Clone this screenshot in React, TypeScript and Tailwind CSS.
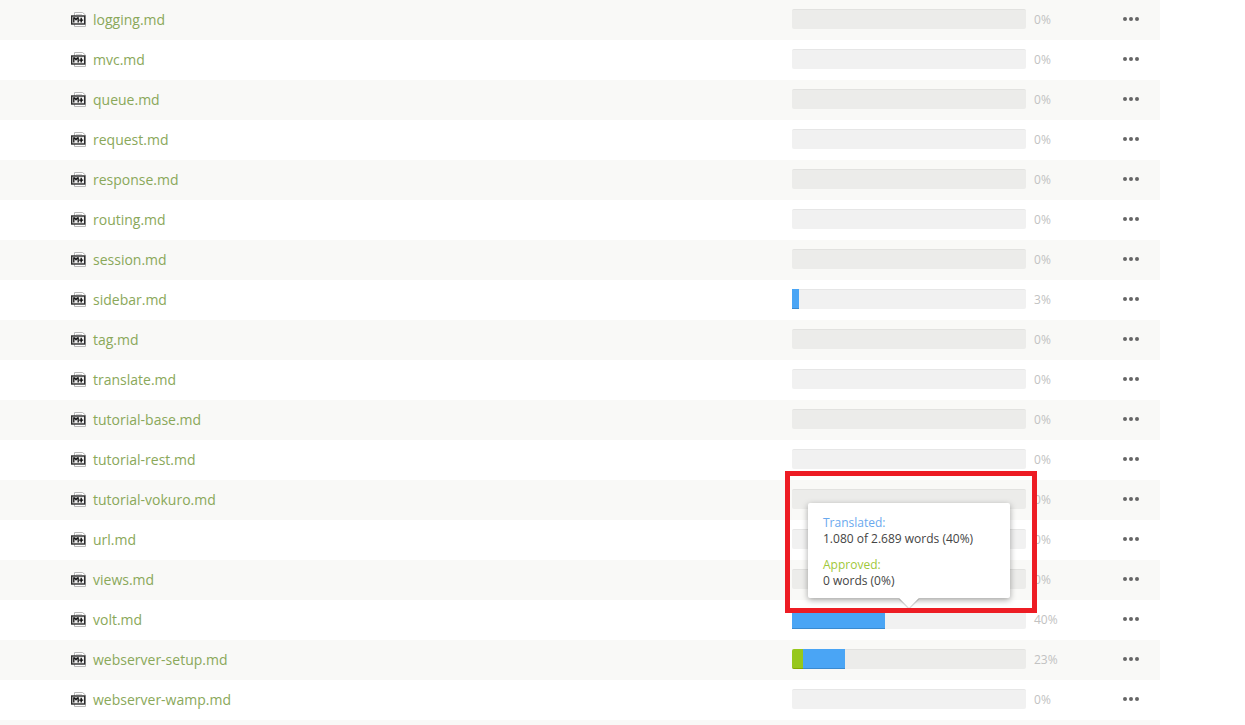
const files = [
  { name: "logging.md", percent: 0 },
  { name: "mvc.md", percent: 0 },
  { name: "queue.md", percent: 0 },
  { name: "request.md", percent: 0 },
  { name: "response.md", percent: 0 },
  { name: "routing.md", percent: 0 },
  { name: "session.md", percent: 0 },
  { name: "sidebar.md", percent: 3, translated: 7 },
  { name: "tag.md", percent: 0 },
  { name: "translate.md", percent: 0 },
  { name: "tutorial-base.md", percent: 0 },
  { name: "tutorial-rest.md", percent: 0 },
  { name: "tutorial-vokuro.md", percent: 0 },
  { name: "url.md", percent: 0 },
  { name: "views.md", percent: 0 },
  { name: "volt.md", percent: 40, translated: 93 },
  { name: "webserver-setup.md", percent: 23, approved: 11, translated: 42 },
  { name: "webserver-wamp.md", percent: 0 },
];

const FileIcon = () => (
  <svg width="16" height="15" viewBox="0 0 16 15" className="shrink-0">
    <path d="M3.5 4V.5h8l3 2.5V14.5H3.5V12" fill="#fff" stroke="#b8b8b8" />
    <path d="M5 2.5h6" stroke="#cfcfcf" />
    <rect x="0.7" y="4" width="13" height="8" fill="#ededed" stroke="#2b2b2b" strokeWidth="1.4" />
    <path d="M2.8 10.4V6h.9L5 7.6 6.3 6h.9v4.4" fill="none" stroke="#111" strokeWidth="1.3" />
    <path d="M10.2 5.8v4.6M8.2 8.1h4" fill="none" stroke="#111" strokeWidth="1.4" />
  </svg>
);

type Props = { name: string; percent: number; translated?: number; approved?: number };

const FileRow = ({ name, percent, translated, approved }: Props) => (
  <div className="group flex h-10 w-[1160px] items-center pb-[2px] odd:bg-[#f9f9f7] even:bg-white">
    <div className="ml-[71px] flex w-[721px] items-center gap-[6px]">
      <FileIcon />
      <span className="text-[14px] text-[#8aa85a]">{name}</span>
    </div>
    <div className="flex h-5 w-[234px] rounded-[2px] border-t border-[#e2e2e0] bg-[#ececea] group-even:border-[#e6e6e6] group-even:bg-[#f1f1f1]">
      {approved ? (
        <div
          className="-mt-px h-5 rounded-l-[2px] border-b border-[#84a800] bg-[#97c81c]"
          style={{ width: approved }}
        />
      ) : null}
      {translated ? (
        <div
          className="-mt-px h-5 border-b border-[#3a8ad0] bg-[#4aa5f5]"
          style={{ width: translated }}
        />
      ) : null}
    </div>
    <span className="ml-2 mt-[2px] w-[60px] text-[12px] text-[#c2c2c2]">{percent}%</span>
    <div className="ml-[29px] flex gap-[2px]">
      <span className="size-[4px] rounded-full bg-[#666]" />
      <span className="size-[4px] rounded-full bg-[#666]" />
      <span className="size-[4px] rounded-full bg-[#666]" />
    </div>
  </div>
);

export default function App() {
  return (
    <div className="relative h-[725px] w-[1245px] overflow-hidden bg-white font-['Open_Sans',sans-serif]">
      <div>
        {files.map((file) => (
          <FileRow key={file.name} {...file} />
        ))}
        <div className="h-10 w-[1160px] bg-[#f9f9f7]" />
      </div>

      <div className="absolute left-[808px] top-[503px] h-[95px] w-[202px] rounded-[2px] bg-white px-[15px] pt-[12px] text-[12px] leading-[16px] text-[#444] shadow-[0_2px_6px_rgba(0,0,0,0.35)]">
        <div className="text-[#6aa9ee]">Translated:</div>
        <div>1.080 of 2.689 words (40%)</div>
        <div className="mt-[10px] text-[#9fc83a]">Approved:</div>
        <div>0 words (0%)</div>
        <div className="absolute left-[94px] top-[88px] size-[14px] rotate-45 bg-white shadow-[1px_1px_1px_rgba(0,0,0,0.2)]" />
      </div>

      <div className="absolute left-[785px] top-[471px] h-[142px] w-[252px] border-[5px] border-[#ed1c24]" />
    </div>
  );
}
